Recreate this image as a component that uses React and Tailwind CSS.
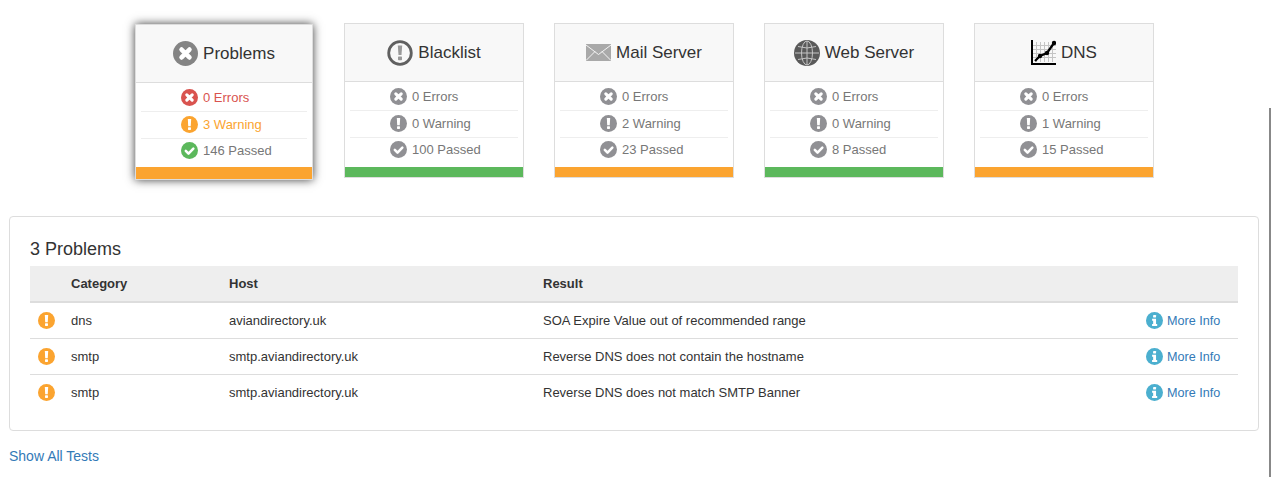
const cards = [
  { title: "Blacklist", icon: <BlacklistIcon />, errors: 0, warnings: 0, passed: 100, bar: "bg-[#5cb85c]" },
  { title: "Mail Server", icon: <MailIcon />, errors: 0, warnings: 2, passed: 23, bar: "bg-[#fba430]" },
  { title: "Web Server", icon: <GlobeIcon />, errors: 0, warnings: 0, passed: 8, bar: "bg-[#5cb85c]" },
  { title: "DNS", icon: <ChartIcon />, errors: 0, warnings: 1, passed: 15, bar: "bg-[#fba430]" },
];

const problems = [
  { category: "dns", host: "aviandirectory.uk", result: "SOA Expire Value out of recommended range" },
  { category: "smtp", host: "smtp.aviandirectory.uk", result: "Reverse DNS does not contain the hostname" },
  { category: "smtp", host: "smtp.aviandirectory.uk", result: "Reverse DNS does not match SMTP Banner" },
];

function TimesIcon({ color, size = 17 }) {
  return (
    <svg width={size} height={size} viewBox="0 0 24 24" className="shrink-0">
      <circle cx="12" cy="12" r="12" fill={color} />
      <path d="M8.2 8.2l7.6 7.6M15.8 8.2l-7.6 7.6" stroke="#fff" strokeWidth="4.4" strokeLinecap="round" />
    </svg>
  );
}

function BangIcon({ color, size = 17 }) {
  return (
    <svg width={size} height={size} viewBox="0 0 24 24" className="shrink-0">
      <circle cx="12" cy="12" r="12" fill={color} />
      <path d="M9.6 4.4h4.8l-.6 10h-3.600z" fill="#fff" />
      <rect x="9.9" y="15.8" width="4.2" height="3.8" rx="0.8" fill="#fff" />
    </svg>
  );
}

function CheckIcon({ color, size = 17 }) {
  return (
    <svg width={size} height={size} viewBox="0 0 24 24" className="shrink-0">
      <circle cx="12" cy="12" r="12" fill={color} />
      <path d="M6.8 12.5l3.8 3.8 6.8-7" fill="none" stroke="#fff" strokeWidth="3.6" strokeLinecap="round" strokeLinejoin="round" />
    </svg>
  );
}

function InfoIcon() {
  return (
    <svg width="17" height="17" viewBox="0 0 24 24" className="shrink-0">
      <circle cx="12" cy="12" r="12" fill="#4bafcf" />
      <rect x="10" y="4.2" width="4.2" height="3.6" rx="0.6" fill="#fff" />
      <path d="M8.6 9.6h5.6v7.2h1.6v2.8H8.6v-2.8h1.5v-4.4H8.6z" fill="#fff" />
    </svg>
  );
}

function BlacklistIcon() {
  return (
    <svg width="26" height="26" viewBox="0 0 26 26" className="shrink-0">
      <circle cx="13" cy="13" r="11.3" fill="#f8f8f8" stroke="#606060" strokeWidth="2.8" />
      <path d="M10.8 5.5h4.4l-.7 9.5h-3z" fill="#999" />
      <rect x="11" y="16.5" width="4" height="3.8" rx="0.7" fill="#999" />
    </svg>
  );
}

function MailIcon() {
  return (
    <svg width="25" height="17" viewBox="0 0 25 17" className="shrink-0">
      <rect width="25" height="17" fill="#a9a9a9" />
      <path d="M0 1l12.5 9.5L25 1M0 16.5l9-9M25 16.5l-9-9" fill="none" stroke="#f4f4f4" strokeWidth="1" />
    </svg>
  );
}

function GlobeIcon() {
  return (
    <svg width="26" height="26" viewBox="0 0 26 26" className="shrink-0">
      <circle cx="13" cy="13" r="13" fill="#5a5a5a" />
      <g fill="none" stroke="#c4c4c4" strokeWidth="1">
        <ellipse cx="13" cy="13" rx="5.5" ry="12" />
        <path d="M13 1v24M1 13h24M4 6.5q9 3 18 0M4 19.5q9-3 18 0" />
      </g>
    </svg>
  );
}

function ChartIcon() {
  return (
    <svg width="25" height="25" viewBox="0 0 25 25" className="shrink-0">
      <g stroke="#c4c4c4" strokeWidth="1">
        <path d="M5.5 2v20M9.5 2v20M13.5 2v20M17.5 2v20M21.5 2v20M2 5.5h23M2 9.5h23M2 13.5h23M2 17.5h23" />
      </g>
      <path d="M1 0v24h24" fill="none" stroke="#000" strokeWidth="2" />
      <path d="M4 21l5-5 7-3 7-10" fill="none" stroke="#000" strokeWidth="2.2" />
      <circle cx="9" cy="16" r="2.2" fill="#000" />
      <circle cx="16" cy="13" r="2.2" fill="#000" />
      <circle cx="23" cy="3" r="2.2" fill="#000" />
    </svg>
  );
}

function StatRow({ icon, text, className = "" }) {
  return (
    <div className={`flex items-center gap-[5px] pl-[40px] ${className}`}>
      {icon}
      <span>{text}</span>
    </div>
  );
}

function Card({ title, icon, errors, warnings, passed, bar }) {
  return (
    <div className="w-[180px] h-[155px] border border-[#ddd] bg-white flex flex-col">
      <div className="h-[58px] bg-[#f8f8f8] border-b border-[#ddd] flex items-center justify-center gap-[5px] text-[17px] text-[#333]">
        {icon}
        <span>{title}</span>
      </div>
      <div className="flex-1 px-[5px] text-[13px] text-[#777]">
        <StatRow icon={<TimesIcon color="#909094" />} text={`${errors} Errors`} className="h-[29px] pt-px border-b border-[#eee]" />
        <StatRow icon={<BangIcon color="#909094" />} text={`${warnings} Warning`} className="h-[27px] pb-px border-b border-[#eee]" />
        <StatRow icon={<CheckIcon color="#909094" />} text={`${passed} Passed`} className="h-[23px]" />
      </div>
      <div className={`h-[10px] ${bar}`} />
    </div>
  );
}

function ActiveCard() {
  return (
    <div className="w-[178px] h-[156px] mt-px ml-px border border-[#ddd] bg-white flex flex-col shadow-[0_0_9px_rgba(0,0,0,0.75)]">
      <div className="h-[58px] bg-[#f8f8f8] border-b border-[#ddd] flex items-center justify-center gap-[5px] text-[17px] text-[#333]">
        <TimesIcon color="#848484" size={25} />
        <span>Problems</span>
      </div>
      <div className="flex-1 px-[5px] text-[13px] text-[#777]">
        <StatRow icon={<TimesIcon color="#d9534f" />} text="0 Errors" className="h-[29px] pt-px border-b border-[#eee] text-[#d9534f]" />
        <StatRow icon={<BangIcon color="#fba430" />} text="3 Warning" className="h-[27px] pb-px border-b border-[#eee] text-[#fba430]" />
        <StatRow icon={<CheckIcon color="#5cb85c" />} text="146 Passed" className="h-[23px]" />
      </div>
      <div className="h-[12px] bg-[#fba430]" />
    </div>
  );
}

export default function App() {
  return (
    <div className="relative h-[477px] overflow-hidden bg-white text-[#333] font-['Liberation_Sans',Arial,sans-serif]">
      <div className="flex gap-[30px] pl-[134px] pt-[23px]">
        <div className="w-[180px]">
          <ActiveCard />
        </div>
        {cards.map(c => <Card key={c.title} {...c} />)}
      </div>

      <div className="mx-[9px] w-[1250px] h-[215px] mt-[36px] border border-[#ddd] rounded px-5 pt-5">
        <h3 className="text-[18px] leading-[25px] mb-[4px]">3 Problems</h3>
        <table className="w-full text-[13px] border-collapse">
          <thead>
            <tr className="bg-[#eee] h-[36px] border-b-2 border-[#ddd] text-left">
              <th className="w-[41px]"></th>
              <th className="w-[158px] font-bold">Category</th>
              <th className="w-[314px] font-bold">Host</th>
              <th className="font-bold">Result</th>
              <th className="w-[110px]"></th>
            </tr>
          </thead>
          <tbody>
            {problems.map((p, idx) => (
              <tr key={idx} className={`h-[36px] ${idx < 2 ? "border-b border-[#ddd]" : ""}`}>
                <td className="pl-2 pt-px"><BangIcon color="#fba430" /></td>
                <td className="pt-px">{p.category}</td>
                <td className="pt-px">{p.host}</td>
                <td className="pt-px">{p.result}</td>
                <td className="pt-px">
                  <a className="flex items-center gap-[4px] text-[12.6px] text-[#337ab7] pl-[18px]" href="#">
                    <InfoIcon />
                    <span className="pt-[2px]">More Info</span>
                  </a>
                </td>
              </tr>
            ))}
          </tbody>
        </table>
      </div>

      <a href="#" className="block ml-[9px] mt-[15px] text-[14px] leading-[20px] text-[#337ab7]">Show All Tests</a>

      {/* scrollbar thumb at the right edge */}
      <div className="absolute right-[3px] top-[108px] bottom-0 w-[2px] bg-[#888]" />
    </div>
  );
}
